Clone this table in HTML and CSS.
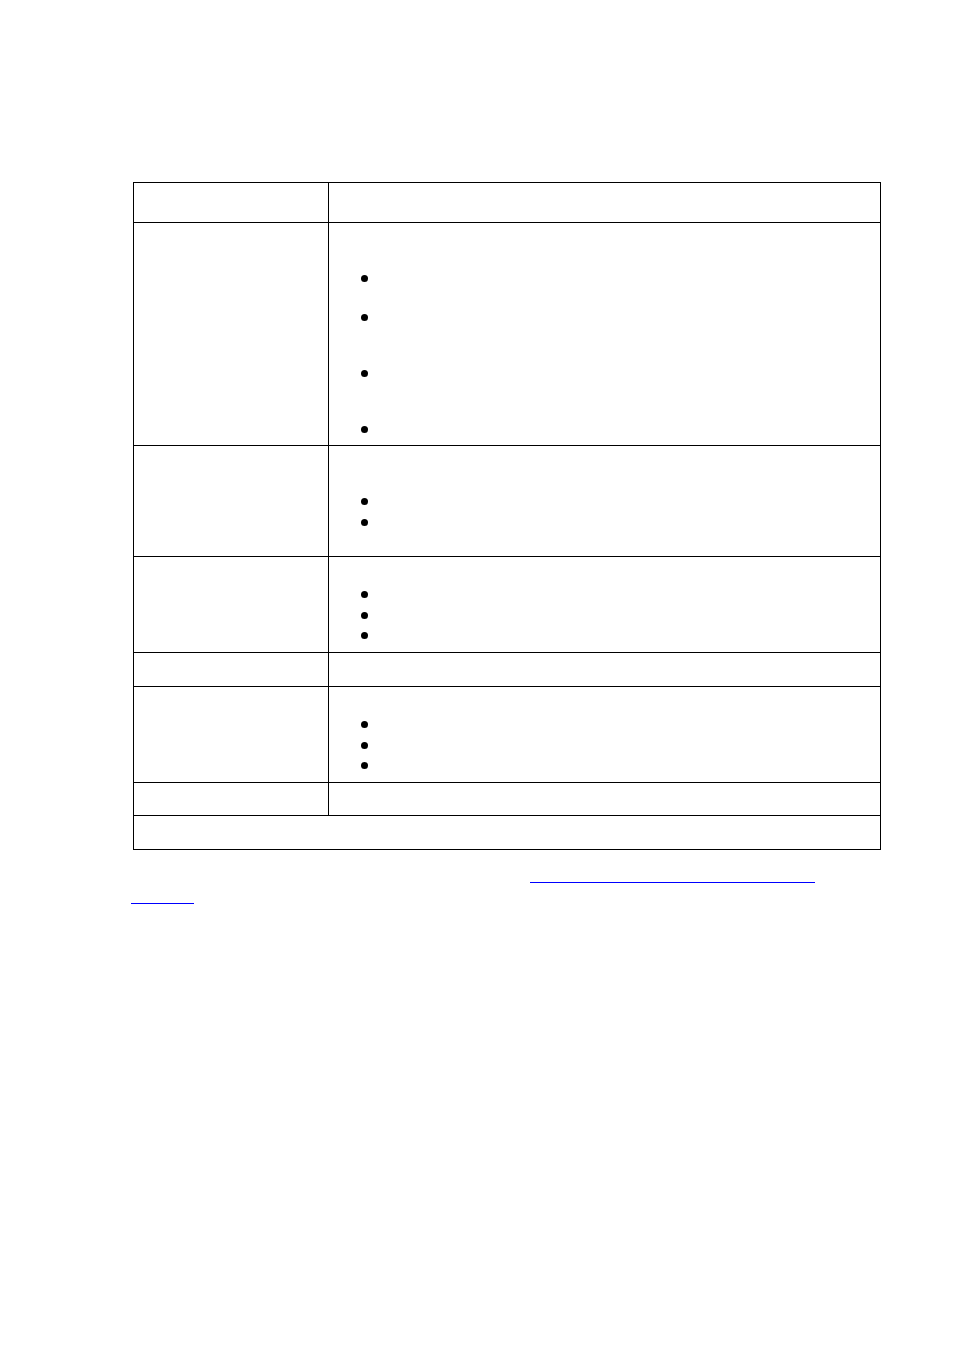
FILE: index.html
```html
<!DOCTYPE html>
<html lang="en">
<head>
<meta charset="utf-8">
<title>Table</title>
<link rel="stylesheet" href="styles.css">
</head>
<body>
<main class="page">
  <div class="table">
    <div class="row row-1">
      <div class="cell cell-label"></div>
      <div class="cell cell-body"></div>
    </div>
    <div class="row row-2">
      <div class="cell cell-label"></div>
      <div class="cell cell-body">
        <ul class="bullets bullets-top-52">
          <li class="item item-39"></li>
          <li class="item item-56"></li>
          <li class="item item-56"></li>
          <li class="item item-last"></li>
        </ul>
      </div>
    </div>
    <div class="row row-3">
      <div class="cell cell-label"></div>
      <div class="cell cell-body">
        <ul class="bullets bullets-top-52">
          <li class="item item-21"></li>
          <li class="item item-last"></li>
        </ul>
      </div>
    </div>
    <div class="row row-4">
      <div class="cell cell-label"></div>
      <div class="cell cell-body">
        <ul class="bullets bullets-top-34">
          <li class="item item-21"></li>
          <li class="item item-20"></li>
          <li class="item item-last"></li>
        </ul>
      </div>
    </div>
    <div class="row row-5">
      <div class="cell cell-label"></div>
      <div class="cell cell-body"></div>
    </div>
    <div class="row row-6">
      <div class="cell cell-label"></div>
      <div class="cell cell-body">
        <ul class="bullets bullets-top-34">
          <li class="item item-21"></li>
          <li class="item item-20"></li>
          <li class="item item-last"></li>
        </ul>
      </div>
    </div>
    <div class="row row-7">
      <div class="cell cell-label"></div>
      <div class="cell cell-body"></div>
    </div>
    <div class="row row-8">
      <div class="cell cell-full"></div>
    </div>
  </div>
  <div class="note">
    <div class="note-line note-line-1"><a class="link link-long" href="#"></a></div>
    <div class="note-line note-line-2"><a class="link link-short" href="#"></a></div>
  </div>
</main>
</body>
</html>
```

FILE: styles.css
```css
html, body {
  margin: 0;
  padding: 0;
  background: #ffffff;
}

body {
  font-family: "Liberation Sans", Arial, sans-serif;
  font-size: 13px;
  color: #000000;
}

.page {
  padding: 182px 0 0 133px;
}

.table {
  box-sizing: border-box;
  width: 748px;
  border: 1px solid #000000;
}

.row {
  display: grid;
  grid-template-columns: 195px 1fr;
  border-bottom: 1px solid #000000;
}

.row:last-child {
  border-bottom: none;
}

.row-1 { height: 39px; }
.row-2 { height: 222px; }
.row-3 { height: 110px; }
.row-4 { height: 95px; }
.row-5 { height: 33px; }
.row-6 { height: 95px; }
.row-7 { height: 32px; }
.row-8 { height: 33px; grid-template-columns: 1fr; }

.cell-label {
  box-sizing: border-box;
  border-right: 1px solid #000000;
}

.bullets {
  list-style: none;
  margin: 0;
  padding: 0 0 0 32px;
}

.bullets-top-52 { padding-top: 52px; }
.bullets-top-34 { padding-top: 34px; }

.item::before {
  content: "";
  display: block;
  width: 7px;
  height: 7px;
  border-radius: 50%;
  background: #000000;
}

.item-20 { height: 20px; }
.item-21 { height: 21px; }
.item-39 { height: 39px; }
.item-56 { height: 56px; }
.item-last { height: 7px; }

.note {
  padding-left: 131px;
  margin-left: -133px;
}

.note-line-1 {
  margin-top: 32px;
  padding-left: 399px;
}

.note-line-2 {
  margin-top: 20px;
}

.link {
  display: block;
  height: 0;
  border-top: 1px solid #0000ff;
}

.link-long { width: 285px; }
.link-short { width: 63px; }
```
